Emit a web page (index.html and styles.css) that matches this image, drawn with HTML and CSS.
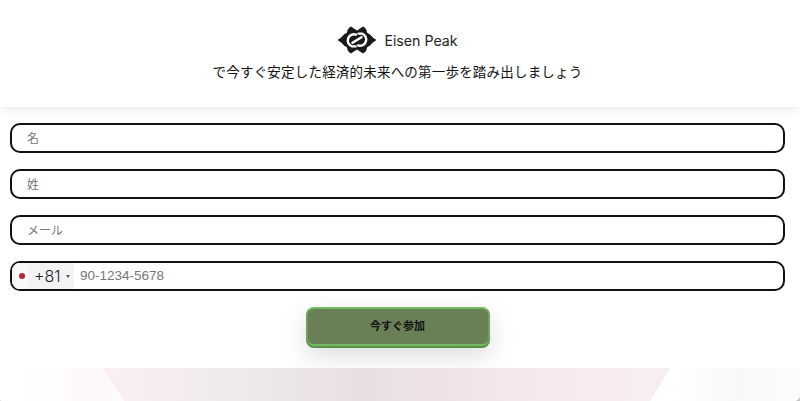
FILE: index.html
```html
<!DOCTYPE html>
<html lang="ja">
<head>
<meta charset="utf-8">
<title>Eisen Peak</title>
<link rel="stylesheet" href="styles.css">
</head>
<body>
<div class="page">
  <header class="hero">
    <div class="brand">
      <svg class="logo" viewBox="0 0 40 28" aria-hidden="true">
        <path class="logo-fill" d="M0.5 14 Q4 12 7.5 8 Q10.5 7.5 10.5 4 Q12 1 14 0.5 Q17 2.5 20 4.5 Q23 2.5 26 0.5 Q28 1 29.5 4 Q29.5 7.5 32.5 8 Q36 12 39.5 14 Q36 16 32.5 20 Q29.5 20.5 29.5 24 Q28 27 26 27.5 Q23 25.5 20 23.5 Q17 25.5 14 27.5 Q12 27 10.5 24 Q10.5 20.5 7.5 20 Q4 16 0.5 14 Z"/>
        <path class="logo-line" d="M19 8.6 A6 6 0 1 0 15 20.4 L18.5 20.4 M21 19.4 A6 6 0 1 0 25 7.6 L21.5 7.6 M15.5 16.8 L24.5 11.2"/>
      </svg>
      <span class="brand-name">Eisen Peak</span>
    </div>
    <p class="tagline">で今すぐ安定した経済的未来への第一歩を踏み出しましょう</p>
  </header>
  <form class="form">
    <input class="field" type="text" placeholder="名">
    <input class="field" type="text" placeholder="姓">
    <input class="field" type="text" placeholder="メール">
    <div class="field phone">
      <div class="dial">
        <span class="flag"><i class="flag-dot"></i></span>
        <span class="code">+81</span>
        <span class="caret"></span>
      </div>
      <input class="phone-input" type="text" placeholder="90-1234-5678">
    </div>
    <button class="submit" type="button">今すぐ参加</button>
  </form>
  <footer class="backdrop">
    <div class="wedge"></div>
  </footer>
</div>
</body>
</html>
```
FILE: styles.css
```css
* { box-sizing: border-box; }
html, body { margin: 0; height: 100%; }
body {
  background: #c4c4c4;
  font-family: "Inter", "Noto Sans CJK JP", sans-serif;
  color: #111;
  overflow: hidden;
}
.page {
  height: 401px;
  display: flex;
  flex-direction: column;
  overflow: hidden;
  background: #fff;
  border-radius: 0 0 6px 2px;
}
.hero {
  height: 107px;
  flex: none;
  display: flex;
  flex-direction: column;
  align-items: center;
  padding: 25px 5px 0 0;
  background: #fff;
  box-shadow: 0 2px 10px rgba(0, 0, 0, 0.1);
}
.brand {
  display: flex;
  align-items: center;
  gap: 7px;
  height: 30px;
}
.logo { width: 40px; height: 28px; }
.logo-fill { fill: #1a1a1a; }
.logo-line { fill: none; stroke: #fff; stroke-width: 2.4; stroke-linecap: round; }
.brand-name { font-size: 14.2px; color: #222; }
.tagline {
  margin: 7px 0 0;
  font-size: 13.5px;
  line-height: 18px;
  letter-spacing: 0.2px;
  color: #111;
  font-family: "Noto Sans CJK JP", sans-serif;
}
.form {
  flex: none;
  display: flex;
  flex-direction: column;
  gap: 16px;
  padding: 16px 15px 0 10px;
}
.field {
  height: 30px;
  width: 100%;
  border: 2px solid #111;
  border-radius: 10px;
  background: #fff;
  padding: 0 15px 2px;
  font-size: 12px;
  font-family: "Noto Sans CJK JP", sans-serif;
  outline: none;
}
.field::placeholder, .phone-input::placeholder { color: #777; opacity: 1; }
.phone {
  display: flex;
  align-items: stretch;
  padding: 0;
  overflow: hidden;
}
.dial {
  display: flex;
  align-items: center;
  background: #f3f3f3;
  width: 62px;
  padding-left: 3px;
  flex: none;
}
.flag {
  width: 13px;
  height: 100%;
  display: flex;
  align-items: center;
  justify-content: center;
  background: #f7f7f7;
}
.flag-dot { width: 6px; height: 6px; border-radius: 50%; background: #b5243a; }
.code { font-size: 16px; font-weight: 300; color: #222; margin-left: 6px; font-family: "Inter", sans-serif; }
.caret {
  margin-left: 5px;
  border-left: 2px solid transparent;
  border-right: 2px solid transparent;
  border-top: 3px solid #555;
}
.phone-input {
  flex: 1;
  border: 0;
  outline: none;
  background: transparent;
  padding: 0 0 1px 6px;
  font-size: 13.5px;
  font-family: "Liberation Sans", sans-serif;
  min-width: 0;
}
.submit {
  align-self: center;
  width: 184px;
  height: 39px;
  border: 2px solid #719f5e;
  border-top-color: #74b85f;
  border-bottom-color: #74b85f;
  border-radius: 8px;
  background: #697f55;
  box-shadow: 0 2px 0 #5c9049, 0 10px 24px rgba(90, 100, 100, 0.22);
  font-size: 11px;
  font-weight: 700;
  font-family: "Noto Sans CJK JP", sans-serif;
  color: #111;
  padding: 0 0 3px;
}
.backdrop {
  margin-top: 22px;
  flex: 1;
  position: relative;
  background: linear-gradient(90deg, #fff 2%, #fefbfc 8%, #fcf7f8 12%, #fff 17%, #fff 84%, #f8f8f8 92%, #fcfcfc 100%);
}
.wedge {
  position: absolute;
  inset: 0;
  background: linear-gradient(90deg, #fbeff1 13%, #eee9ea 30%, #e8dfe3 45%, #f1e3e7 58%, #f8e9ec 70%, #f7eef0 84%);
  clip-path: polygon(103px 0, 670px 0, 650px 33px, 124px 33px);
}
```
